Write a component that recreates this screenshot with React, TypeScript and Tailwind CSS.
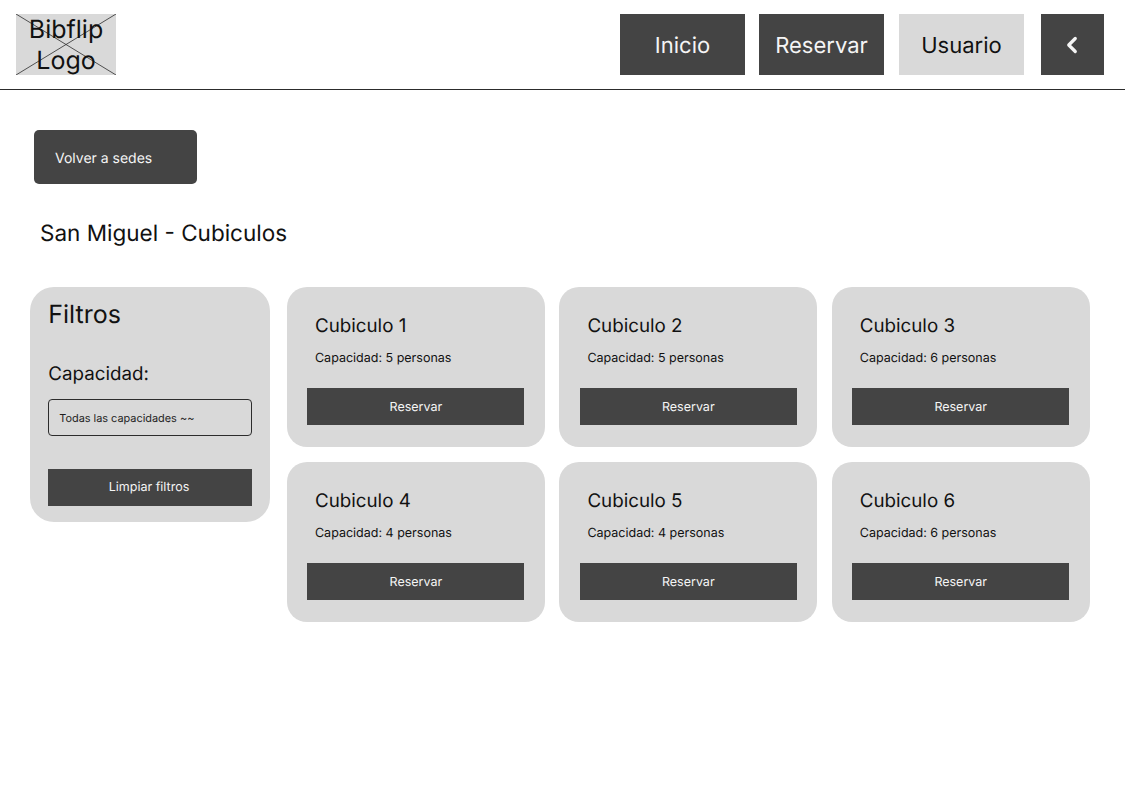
import { ChevronLeft } from 'lucide-react'

const cubiculos = [
  { name: 'Cubiculo 1', capacity: 5 },
  { name: 'Cubiculo 2', capacity: 5 },
  { name: 'Cubiculo 3', capacity: 6 },
  { name: 'Cubiculo 4', capacity: 4 },
  { name: 'Cubiculo 5', capacity: 4 },
  { name: 'Cubiculo 6', capacity: 6 },
]

function NavButton({ label, active }: { label: string; active?: boolean }) {
  return (
    <div
      className={`flex h-[61px] w-[125px] items-center justify-center pt-[4px] text-[22px] ${
        active ? 'bg-[#d9d9d9] text-[#111111]' : 'bg-[#444444] text-[#f5f5f5]'
      }`}
    >
      {label}
    </div>
  )
}

function Logo() {
  return (
    <div className="relative flex h-[61px] w-[100px] items-center justify-center bg-[#d9d9d9] pt-[3px] text-center text-[25px] leading-[31px] text-[#111111]">
      <svg className="absolute inset-0 h-full w-full" viewBox="0 0 100 61" preserveAspectRatio="none">
        <path d="M0 0L100 61M100 0L0 61" stroke="#2c2c2c" strokeWidth="0.8" fill="none" />
      </svg>
      <span className="relative">
        Bibflip
        <br />
        Logo
      </span>
    </div>
  )
}

function CubiculoCard({ name, capacity }: { name: string; capacity: number }) {
  return (
    <div className="flex h-40 flex-col rounded-[20px] bg-[#d9d9d9] pl-[20.4px] pr-[20.6px] pt-[27px]">
      <h2 className="pl-[7.6px] text-[18.75px] leading-6 text-[#111111]">{name}</h2>
      <p className="mt-[13px] pl-[7.6px] text-[12.5px] leading-4 text-[#111111]">Capacidad: {capacity} personas</p>
      <div className="mt-[21px] flex h-[37px] items-center justify-center bg-[#444444] pt-[3px] text-[12.5px] text-[#f5f5f5]">
        Reservar
      </div>
    </div>
  )
}

export default function App() {
  return (
    <div className="min-h-[800px] bg-white font-['Inter',sans-serif] [text-rendering:geometricPrecision]">
      <header className="flex h-[90px] items-start justify-between border-b border-[#2c2c2c] pl-4 pr-[21px] pt-[14px]">
        <Logo />
        <nav className="flex">
          <NavButton label="Inicio" />
          <div className="ml-[14px]">
            <NavButton label="Reservar" />
          </div>
          <div className="ml-[15px]">
            <NavButton label="Usuario" active />
          </div>
          <div className="ml-[17px] flex h-[61px] w-[63px] items-center justify-center bg-[#444444] pr-[2px] text-[#f5f5f5]">
            <ChevronLeft size={26} strokeWidth={3} />
          </div>
        </nav>
      </header>

      <main className="px-[30px] pt-10">
        <div className="ml-[3.5px] flex h-[54px] w-[163.5px] items-center rounded-[5px] bg-[#444444] pl-[21.5px] pt-[4px] text-sm text-[#f5f5f5]">
          Volver a sedes
        </div>
        <h1 className="ml-[10px] mt-[35px] text-[22.5px] leading-[30px] text-[#111111]">San Miguel - Cubiculos</h1>

        <div className="mt-[38px] flex items-start gap-[17px]">
          <aside className="flex h-[235px] w-[240px] shrink-0 flex-col rounded-[24px] bg-[#d9d9d9] px-[18.25px] pt-[12px]">
            <h2 className="text-[25px] leading-[33px] text-[#111111]">Filtros</h2>
            <p className="mt-[30px] text-[18.75px] leading-6 text-[#111111]">Capacidad:</p>
            <div className="mt-[13px] flex h-[37px] items-center rounded-[4px] border border-[#2c2c2c] pl-[10px] pt-[2px] text-[10.9px] text-[#1e1e1e]">
              Todas las capacidades ~~
            </div>
            <div className="mt-[33px] flex h-[37px] items-center justify-center bg-[#444444] pr-[2px] pt-[2px] text-[12.5px] text-[#f5f5f5]">
              Limpiar filtros
            </div>
          </aside>

          <div className="grid w-[802.8px] grid-cols-3 gap-x-[14.4px] gap-y-[15px]">
            {cubiculos.map((c) => (
              <CubiculoCard key={c.name} name={c.name} capacity={c.capacity} />
            ))}
          </div>
        </div>
      </main>
    </div>
  )
}
